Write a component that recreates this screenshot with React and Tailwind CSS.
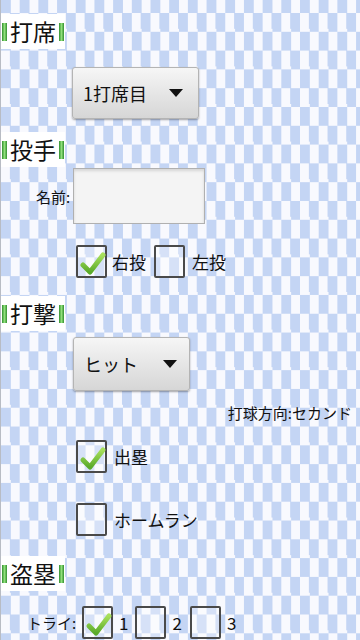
import React from "react";

function Bar() {
  return (
    <div className="w-[5px] h-[18px] bg-gradient-to-r from-[#2f8f2f] via-[#8fe07a] to-[#2f8f2f]" />
  );
}

function Header({ children, className = "" }) {
  return (
    <div className={"flex items-center w-[64px] h-[35px] bg-white pl-[1px] " + className}>
      <Bar />
      <span className="text-[23px] leading-none text-[#111] px-[3px] tracking-[0px]">{children}</span>
      <Bar />
    </div>
  );
}

function Arrow() {
  return (
    <svg width="14" height="8" viewBox="0 0 14 8">
      <polygon points="0,0 14,0 7,8" fill="#111" />
    </svg>
  );
}

function Spinner({ label, className = "" }) {
  return (
    <div
      className={
        "flex items-center justify-between rounded-[3px] border border-[#b4b4b4] bg-gradient-to-b from-[#f6f6f6] to-[#d6d6d6] shadow-[0_1px_2px_rgba(0,0,0,0.35)] " +
        className
      }
    >
      <span className="text-[18px] leading-none text-[#111]">{label}</span>
      <Arrow />
    </div>
  );
}

function Check({ checked, className = "" }) {
  return (
    <div
      className={
        "relative w-[31px] h-[33px] border-2 border-[#4a4a4a] rounded-[2px] bg-white/30 shrink-0 " + className
      }
    >
      {checked && (
        <svg className="absolute left-[1px] top-[2px]" width="28" height="28" viewBox="0 0 28 28">
          <defs>
            <linearGradient id="ck" x1="0" y1="0" x2="0" y2="1">
              <stop offset="0" stopColor="#a8e05c" />
              <stop offset="1" stopColor="#5aaa2a" />
            </linearGradient>
          </defs>
          <path
            d="M4 16 L11 23 L24 6"
            fill="none"
            stroke="url(#ck)"
            strokeWidth="5"
            strokeLinecap="round"
            strokeLinejoin="round"
          />
        </svg>
      )}
    </div>
  );
}

export default function App() {
  return (
    <div className="w-[360px] h-[640px] overflow-hidden border-l border-[#b8bcc4] bg-[repeating-conic-gradient(#c4d5f4_0_25%,#f8f9fe_0_50%)] bg-[length:18.7px_37.6px] bg-[position:0_13px] font-['Noto_Sans_CJK_JP',sans-serif] text-[#111]">
      <div className="flex flex-col">
        <Header className="mt-[14px]">打席</Header>
        <Spinner label="1打席目" className="ml-[71px] mt-[18px] w-[127px] h-[52px] pl-[10px] pr-[15px]" />

        <Header className="mt-[13px]">投手</Header>
        <div className="flex items-center mt-[1px]">
          <span className="ml-[35px] w-[37px] text-[15px] leading-none">名前:</span>
          <div className="w-[132px] h-[56px] border border-[#b0b0b0] bg-[#f4f4f4] shadow-[inset_0_2px_3px_rgba(0,0,0,0.12)]" />
        </div>

        <div className="flex items-center mt-[21px] ml-[75px]">
          <Check checked />
          <span className="ml-[5px] text-[17px] leading-none">右投</span>
          <Check className="ml-[8px]" />
          <span className="ml-[7px] text-[17px] leading-none">左投</span>
        </div>

        <Header className="mt-[18px]">打撃</Header>
        <Spinner label="ヒット" className="ml-[72px] mt-[6px] w-[117px] h-[54px] pl-[10px] pr-[12px]" />

        <div className="mt-[12px] pr-[8px] text-right text-[15px] leading-[20px]">打球方向:セカンド</div>

        <div className="flex items-center mt-[17px] ml-[75px]">
          <Check checked />
          <span className="ml-[7px] text-[17px] leading-none">出塁</span>
        </div>

        <div className="flex items-center mt-[30px] ml-[75px]">
          <Check />
          <span className="ml-[7px] text-[17px] leading-none">ホームラン</span>
        </div>

        <Header className="mt-[20px]">盗塁</Header>

        <div className="flex items-center mt-[15px] ml-[26px]">
          <span className="text-[15px] leading-none w-[55px]">トライ:</span>
          <Check checked />
          <span className="ml-[6px] text-[17px] leading-none">1</span>
          <Check className="ml-[7px]" />
          <span className="ml-[6px] text-[17px] leading-none">2</span>
          <Check className="ml-[8px]" />
          <span className="ml-[6px] text-[17px] leading-none">3</span>
        </div>
      </div>
    </div>
  );
}
